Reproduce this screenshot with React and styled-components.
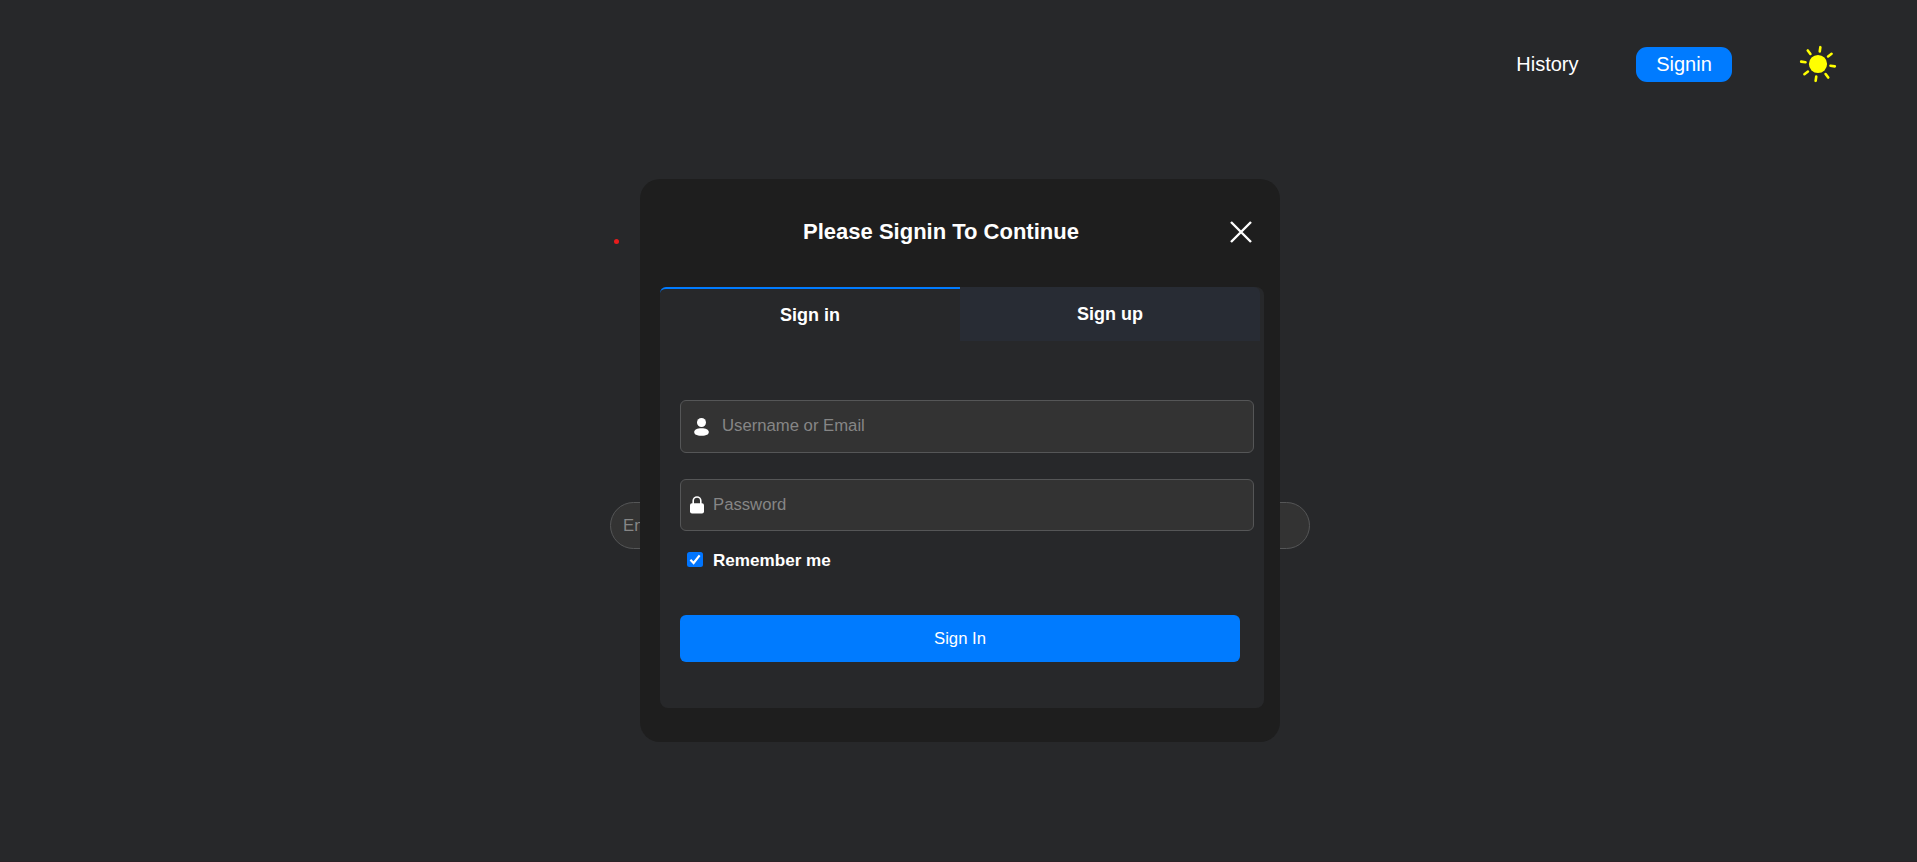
import React from "react";
import styled, { createGlobalStyle } from "styled-components";

const GlobalStyle = createGlobalStyle`
  *, *::before, *::after { box-sizing: border-box; }
  body {
    margin: 0;
    background: #27282a;
    color: #fff;
    font-family: Arial, "Liberation Sans", sans-serif;
    overflow: hidden;
  }
  button, input { font-family: inherit; }
`;

const Page = styled.div`
  height: 100vh;
  display: flex;
  flex-direction: column;
  border-bottom: 1px solid #2b2227;
`;

const Header = styled.header`
  height: 128px;
  padding-right: 80px;
  display: flex;
  flex-shrink: 0;
  align-items: center;
  justify-content: flex-end;
`;

const NavLink = styled.a`
  font-size: 20px;
  line-height: 24px;
  color: #fff;
  margin-right: 57.5px;
`;

const NavButton = styled.button`
  width: 96px;
  height: 35px;
  margin: 1px 67px 0 0;
  padding: 0 0 1px;
  border: 0;
  border-radius: 11px;
  background: #007bff;
  color: #fff;
  font-size: 20px;
`;

const ThemeToggle = styled.button`
  display: flex;
  padding: 0;
  border: 0;
  background: none;
`;

const Main = styled.main`
  flex: 1;
  display: flex;
  justify-content: center;
  align-items: flex-start;
  padding: 374px 0 0 3px;
`;

const SearchInput = styled.input`
  width: 700px;
  height: 47px;
  padding: 0 12px;
  border: 1px solid #555657;
  border-radius: 24px;
  background: #333;
  font-size: 16.7px;
  &::placeholder { color: #868686; opacity: 1; }
`;

const RedDot = styled.span`
  position: absolute;
  left: 613.8px;
  top: 239.4px;
  width: 5px;
  height: 5px;
  border-radius: 50%;
  background: #e81c1c;
`;

const Overlay = styled.div`
  position: fixed;
  inset: 0;
  display: flex;
  justify-content: center;
  align-items: flex-start;
  padding: 179px 0 0 3px;
`;

const Modal = styled.section`
  width: 640px;
  height: 563px;
  padding: 0 16px 0 20px;
  border-radius: 20px;
  background: #1e1e1e;
`;

const ModalHeader = styled.div`
  height: 108px;
  display: flex;
  align-items: center;
  padding: 0 12px 2px 0;
`;

const Title = styled.h2`
  flex: 1;
  margin: 0;
  padding: 0 8px 1px 0;
  text-align: center;
  font-size: 22px;
  line-height: 26px;
`;

const CloseButton = styled.button`
  display: flex;
  padding: 0;
  border: 0;
  background: none;
`;

const Card = styled.div`
  height: 421px;
  border-radius: 8px;
  background: #27282a;
`;

const Tabs = styled.div`
  display: flex;
  width: 600px;
`;

const Tab = styled.button`
  flex: 1;
  height: 54px;
  padding: 0;
  border: 0;
  border-top: ${(p) => (p.$active ? "2px solid #007bff" : "0")};
  border-radius: ${(p) => (p.$active ? "6px 0 0 0" : "0 6px 0 0")};
  background: ${(p) => (p.$active ? "#27282a" : "#282c34")};
  color: #fff;
  font-size: 18px;
  font-weight: 700;
`;

const Form = styled.form`
  display: flex;
  flex-direction: column;
  padding: 59px 10px 0 20px;
`;

const Field = styled.label`
  display: flex;
  align-items: center;
  height: ${(p) => p.$height}px;
  margin-bottom: ${(p) => p.$gap}px;
  padding-left: ${(p) => p.$inset}px;
  gap: ${(p) => p.$iconGap}px;
  border: 1px solid #555657;
  border-radius: 6px;
  background: #333;
`;

const FieldInput = styled.input`
  flex: 1;
  min-width: 0;
  padding: 0 0 ${(p) => (p.type === "password" ? 0 : 2)}px;
  border: 0;
  outline: 0;
  background: transparent;
  color: #fff;
  font-size: 16.7px;
  &::placeholder { color: #868686; opacity: 1; }
`;

const Remember = styled.label`
  display: flex;
  align-items: center;
  gap: 10px;
  height: 20px;
  margin-left: 7px;
  font-size: 17.1px;
  font-weight: 700;
`;

const RememberText = styled.span`
  padding-top: 2px;
`;

const CheckBox = styled.span`
  display: flex;
  width: 16px;
  height: 15px;
  margin-bottom: 1px;
  border-radius: 2.5px;
  background: #0075ff;
`;

const Submit = styled.button`
  width: 560px;
  height: 47px;
  margin-top: 45px;
  padding: 1px 0 0;
  border: 0;
  border-radius: 6px;
  background: #007bff;
  color: #fff;
  font-size: 16.7px;
`;

const rays = [0, 45, 90, 135, 180, 225, 270, 315];

const SunIcon = () => (
  <svg width="38" height="38" viewBox="-19 -19 38 38">
    <circle r="9.1" fill="#ff0" />
    {rays.map((a) => (
      <line key={a} y1="-12.6" y2="-17" stroke="#ff0" strokeWidth="2.6" strokeLinecap="round" transform={`rotate(${a + 8})`} />
    ))}
  </svg>
);

const CloseIcon = () => (
  <svg width="22" height="22" viewBox="0 0 22 22">
    <path d="M1 1 21 21M21 1 1 21" stroke="#fff" strokeWidth="2.4" />
  </svg>
);

const UserIcon = () => (
  <svg width="15" height="18" viewBox="0 0 15 18">
    <circle cx="7.5" cy="4.5" r="4.5" fill="#fff" />
    <path d="M.2 14c0-2.2 3-3.7 7.3-3.7s7.3 1.5 7.3 3.7-2 3.7-7.3 3.7S.2 16.2.2 14Z" fill="#fff" />
  </svg>
);

const LockIcon = () => (
  <svg width="14" height="18" viewBox="0 0 14 18">
    <path d="M3.2 8V4.8a3.800 3.800 0 0 1 7.600 0V8" fill="none" stroke="#fff" strokeWidth="1.6" />
    <rect y="7.2" width="14" height="10.4" rx="2" fill="#fff" />
  </svg>
);

export default function App() {
  return (
    <Page>
      <GlobalStyle />
      <Header>
        <NavLink>History</NavLink>
        <NavButton>Signin</NavButton>
        <ThemeToggle aria-label="Theme"><SunIcon /></ThemeToggle>
      </Header>
      <Main>
        <SearchInput placeholder="Enter" />
      </Main>
      <RedDot />
      <Overlay>
        <Modal>
          <ModalHeader>
            <Title>Please Signin To Continue</Title>
            <CloseButton aria-label="Close"><CloseIcon /></CloseButton>
          </ModalHeader>
          <Card>
            <Tabs>
              <Tab $active>Sign in</Tab>
              <Tab>Sign up</Tab>
            </Tabs>
            <Form>
              <Field $height={53} $gap={26} $inset={13} $iconGap={13}>
                <UserIcon />
                <FieldInput placeholder="Username or Email" />
              </Field>
              <Field $height={52} $gap={19} $inset={9} $iconGap={9}>
                <LockIcon />
                <FieldInput type="password" placeholder="Password" />
              </Field>
              <Remember>
                <CheckBox>
                  <svg width="16" height="15" viewBox="0 0 16 15">
                    <path d="M3.4 7.8 6.6 11 12.6 3.4" fill="none" stroke="#fff" strokeWidth="2.2" />
                  </svg>
                </CheckBox>
                <RememberText>Remember me</RememberText>
              </Remember>
              <Submit type="button">Sign In</Submit>
            </Form>
          </Card>
        </Modal>
      </Overlay>
    </Page>
  );
}
